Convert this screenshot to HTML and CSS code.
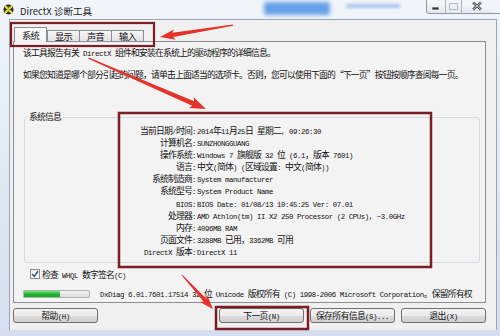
FILE: index.html
```html
<!DOCTYPE html>
<html lang="zh">
<head>
<meta charset="UTF-8">
<title>DirectX 诊断工具</title>
<link rel="stylesheet" href="styles.css">
</head>
<body>
<div class="window">
  <div class="titlebar">
    <svg class="app-icon" width="11" height="11" viewBox="0 0 11 11">
      <circle cx="5.5" cy="5.5" r="5" fill="#2a2a2a"/>
      <path d="M2.6 2.6 L8.4 8.4 M8.4 2.6 L2.6 8.4" stroke="#e4d43c" stroke-width="2.2" stroke-linecap="round"/>
      <circle cx="5.5" cy="5.5" r="1.2" fill="#9ad13a"/>
    </svg>
    <span class="title">DirectX 诊断工具</span>
    <div class="glass-blob"></div>
    <div class="glass-text"></div>
    <svg class="caption" width="74" height="15" viewBox="0 0 74 15">
      <defs>
        <linearGradient id="cap" x1="0" y1="0" x2="0" y2="1">
          <stop offset="0" stop-color="#f7f9fc"/>
          <stop offset="1" stop-color="#e2e8f0"/>
        </linearGradient>
      </defs>
      <path d="M0.5 -1 V11 Q0.5 13.5 3 13.5 H74" fill="url(#cap)" stroke="#8c98a8"/>
      <path d="M19.5 0 V13.5 M35.5 0 V13.5" stroke="#a9b3c0"/>
      <rect x="6" y="7" width="7" height="3" fill="#3b3b3b" stroke="#fff" stroke-width="0.6"/>
      <rect x="23.5" y="3.5" width="8" height="6" fill="none" stroke="#b9bec6"/>
      <path d="M47 2.5 L55 9.5 M55 2.5 L47 9.5" stroke="#444" stroke-width="2.4"/>
      <path d="M47 2.5 L55 9.5 M55 2.5 L47 9.5" stroke="#f4f4f4" stroke-width="0.8"/>
    </svg>
  </div>

  <div class="client">
    <div class="tabs">
      <div class="tab active">系统</div>
      <div class="tab">显示</div>
      <div class="tab">声音</div>
      <div class="tab">输入</div>
    </div>

    <div class="panel">
      <p class="intro">该工具报告有关<span class="m"> DirectX </span>组件和安装在系统上的驱动程序的详细信息。</p>
      <p class="intro second">如果您知道是哪个部分引起的问题，请单击上面适当的选项卡。否则，您可以使用下面的“下一页”按钮按顺序查阅每一页。</p>

      <fieldset class="group">
        <legend>系统信息</legend>
        <div class="info">
          <span class="key">当前日期<span class="m">/</span>时间<span class="m">:</span></span>
          <span class="val"><span class="m">2014</span>年<span class="m">11</span>月<span class="m">25</span>日<span class="m"> </span>星期二<span class="m">, 09:26:30</span></span>

          <span class="key">计算机名<span class="m">:</span></span>
          <span class="val"><span class="m">SUNZHONGGUANG</span></span>

          <span class="key">操作系统<span class="m">:</span></span>
          <span class="val"><span class="m">Windows 7 </span>旗舰版<span class="m"> 32 </span>位<span class="m"> (6.1</span>，版本<span class="m"> 7601)</span></span>

          <span class="key">语言<span class="m">:</span></span>
          <span class="val">中文<span class="m">(</span>简体<span class="m">) (</span>区域设置<span class="m">: </span>中文<span class="m">(</span>简体<span class="m">))</span></span>

          <span class="key">系统制造商<span class="m">:</span></span>
          <span class="val"><span class="m">System manufacturer</span></span>

          <span class="key">系统型号<span class="m">:</span></span>
          <span class="val"><span class="m">System Product Name</span></span>

          <span class="key"><span class="m">BIOS:</span></span>
          <span class="val"><span class="m">BIOS Date: 01/08/13 10:45:25 Ver: 07.01</span></span>

          <span class="key">处理器<span class="m">:</span></span>
          <span class="val"><span class="m">AMD Athlon(tm) II X2 250 Processor (2 CPUs), ~3.0GHz</span></span>

          <span class="key">内存<span class="m">:</span></span>
          <span class="val"><span class="m">4096MB RAM</span></span>

          <span class="key">页面文件<span class="m">:</span></span>
          <span class="val"><span class="m">3288MB </span>已用，<span class="m">3362MB </span>可用</span>

          <span class="key"><span class="m">DirectX </span>版本<span class="m">:</span></span>
          <span class="val"><span class="m">DirectX 11</span></span>
        </div>
      </fieldset>

      <div class="check">
        <span class="box">
          <svg width="8" height="8" viewBox="0 0 8 8"><path d="M1 4 L3.2 6.4 L7 1.2" fill="none" stroke="#3c4f86" stroke-width="1.5"/></svg>
        </span>
        <span>检查<span class="m"> WHQL </span>数字签名<span class="m">(C)</span></span>
      </div>

      <div class="status">
        <div class="progress"><div class="bar" style="width: 55%"></div></div>
        <div class="copyright"><span class="m">DxDiag 6.01.7601.17514 32 </span>位<span class="m"> Unicode </span>版权所有<span class="m"> (C) 1998-2006 Microsoft Corporation</span>。保留所有权</div>
      </div>
    </div>

    <div class="buttons">
      <button class="btn">帮助<span class="m">(H)</span></button>
      <div class="spacer"></div>
      <button class="btn">下一页<span class="m">(N)</span></button>
      <button class="btn">保存所有信息<span class="m">(S)...</span></button>
      <button class="btn">退出<span class="m">(X)</span></button>
    </div>
  </div>

  <!-- red annotations drawn over the screenshot -->
  <svg class="marks" width="500" height="336" viewBox="0 0 500 336">
    <g fill="none" stroke="#7c1d22">
      <rect x="11" y="23" width="143" height="23" stroke-width="2.2"/>
      <rect x="119" y="113" width="312" height="154" stroke-width="2.5"/>
      <rect x="216" y="307" width="92" height="22" stroke-width="2.5"/>
    </g>
    <g fill="#e5322a">
      <polygon transform="translate(160 37) rotate(170.7)" points="-74,-0.6 -13,-2.1 -15,-5.2 0,0 -15,5.2 -13,2.1 -74,0.6"/>
      <polygon transform="translate(206 109) rotate(23.4)" points="-128,-0.6 -14,-2.4 -16,-5.8 0,0 -16,5.8 -14,2.4 -128,0.6"/>
      <polygon transform="translate(213 309) rotate(47.6)" points="-46,-0.5 -12,-2 -14,-5 0,0 -14,5 -12,2 -46,0.5"/>
    </g>
  </svg>
</div>
</body>
</html>
```

FILE: styles.css
```css
* { margin: 0; padding: 0; box-sizing: border-box; }
body {
  width: 500px; height: 336px; overflow: hidden;
  font-family: "Noto Sans CJK SC", sans-serif;
  font-size: 8.8px; letter-spacing: -0.8px; color: #111;
  background: #dde6f1;
}
.m { font-family: "Liberation Mono", monospace; font-size: 7.4px; line-height: 1; letter-spacing: -0.44px; }

.window {
  position: relative;
  width: 500px; height: 336px;
  padding: 0 3px 6px 9px;
  display: flex; flex-direction: column;
  background: linear-gradient(#f1f5fa, #dbe5f0 70%, #d4def0);
}

/* title bar */
.titlebar {
  position: relative;
  height: 19px; margin: 0 -3px 0 -9px;
  display: flex; align-items: flex-start;
}
.app-icon { margin: 4px 0 0 3px; }
.title { margin-left: 6px; padding-top: 2px; line-height: 18px; font-size: 9.5px; letter-spacing: 0; color: #1a1a1a; }
.glass-blob {
  position: absolute; left: 264px; top: 2px; width: 66px; height: 13px;
  background: #4f93e4; filter: blur(2px); opacity: .85; border-radius: 2px;
}
.glass-text {
  position: absolute; left: 346px; top: 4px; width: 54px; height: 4px;
  background: #9dbde9; filter: blur(1.5px); opacity: .8;
}
.caption { margin-left: auto; }

/* client area */
.client {
  flex: 1;
  background: #f0f0f0;
  border: 1px solid #9ba6b4; border-bottom: none;
  padding: 7px 10px 0 3px;
  display: flex; flex-direction: column;
}

.tabs {
  position: relative; z-index: 1;
  display: flex; align-items: flex-end;
  height: 15px; padding-left: 1px; margin-bottom: -1px;
}
.tab {
  width: 33px; height: 11px; margin: 0 0 1px -1px;
  border: 1px solid #8b8e95; border-bottom: none;
  background: linear-gradient(#f6f6f6, #e2e2e2);
  text-align: center; line-height: 10px; font-size: 9.2px;
}
.tab.active {
  position: relative; z-index: 2;
  height: 15px; margin: 0;
  background: linear-gradient(#fcfcfc, #f3f3f3);
  line-height: 14px;
}
.tab.active + .tab { margin-left: 0; }

.panel {
  height: 262px;
  border: 1px solid #8b8e95;
  background: #f3f3f3;
  padding: 5px 5px 1px 9px;
  display: flex; flex-direction: column;
}
.intro { height: 12px; line-height: 12px; white-space: nowrap; }
.intro.second { margin-top: 10px; }

.group {
  margin: 30px 0 0 1px;
  border: 1px solid #d3dce3; border-radius: 3px;
  padding: 2px 0 4px 0;
}
.group legend { margin-left: 2px; padding: 0 2px; line-height: 12px; }
.info {
  display: grid;
  grid-template-columns: 171px auto;
  grid-auto-rows: 12.1px;
  column-gap: 1px;
  line-height: 12.1px;
  white-space: nowrap;
}
.key { text-align: right; }

.check {
  display: flex; align-items: center; gap: 2px;
  height: 12px; margin-top: 5px; padding-left: 7px;
}
.box {
  width: 10px; height: 10px;
  border: 1px solid #8e8f8f;
  background: linear-gradient(#e9e9e9, #fdfdfd);
  display: flex; align-items: center; justify-content: center;
}

.status {
  display: flex; align-items: center;
  height: 12px; margin-top: 8px;
}
.progress {
  width: 67px; height: 8px;
  border: 1px solid #b3b3b3; border-radius: 1px;
  background: linear-gradient(#f4f4f4, #dadada);
}
.bar { height: 100%; background: linear-gradient(#7be283, #22b833 50%, #15a625); }
.copyright { flex: 1; margin-left: 10px; white-space: nowrap; line-height: 12px; }

.buttons { display: flex; gap: 6px; margin-top: 5px; }
.spacer { flex: 1; }
.btn {
  width: 85px; height: 15px;
  font: inherit; letter-spacing: -0.6px; color: #111;
  border: 1px solid #707070; border-radius: 3px;
  background: linear-gradient(#f2f2f2, #ebebeb 50%, #dddddd 51%, #cfcfcf);
  line-height: 13px; text-align: center;
}

.marks { position: absolute; left: 0; top: 0; pointer-events: none; }
```
